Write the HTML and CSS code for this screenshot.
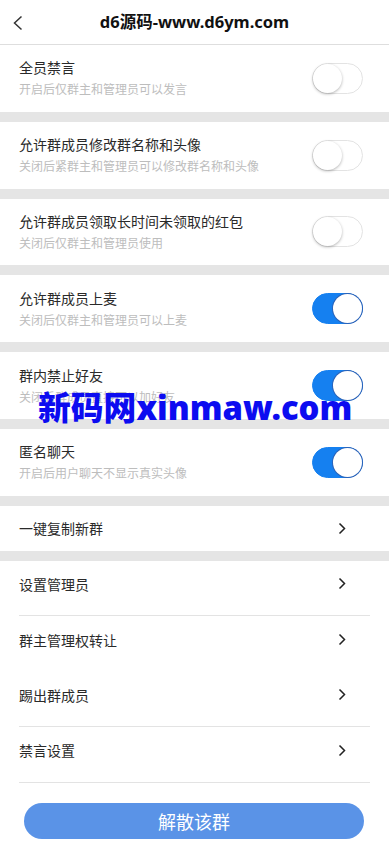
FILE: index.html
```html
<!DOCTYPE html>
<html lang="zh">
<head>
<meta charset="utf-8">
<title>群设置</title>
<link rel="stylesheet" href="styles.css">
</head>
<body>
<div class="page">
  <header class="topbar">
    <span class="back">
      <svg width="12" height="16" viewBox="0 0 12 16"><path d="M9.5 1.5 L2.5 8 L9.5 14.5" fill="none" stroke="#333" stroke-width="1.5"/></svg>
    </span>
    <h1 class="title">d6源码-www.d6ym.com</h1>
  </header>

  <section class="card switch-row">
    <div class="texts"><div class="t">全员禁言</div><div class="s">开启后仅群主和管理员可以发言</div></div>
    <span class="toggle"><span class="knob"></span></span>
  </section>
  <section class="card switch-row">
    <div class="texts"><div class="t">允许群成员修改群名称和头像</div><div class="s">关闭后紧群主和管理员可以修改群名称和头像</div></div>
    <span class="toggle"><span class="knob"></span></span>
  </section>
  <section class="card switch-row">
    <div class="texts"><div class="t">允许群成员领取长时间未领取的红包</div><div class="s">关闭后仅群主和管理员使用</div></div>
    <span class="toggle"><span class="knob"></span></span>
  </section>
  <section class="card switch-row">
    <div class="texts"><div class="t">允许群成员上麦</div><div class="s">关闭后仅群主和管理员可以上麦</div></div>
    <span class="toggle on"><span class="knob"></span></span>
  </section>
  <section class="card switch-row">
    <div class="texts"><div class="t">群内禁止好友</div><div class="s">关闭后群成员直接可以加好友</div></div>
    <span class="toggle on"><span class="knob"></span></span>
  </section>
  <section class="card switch-row">
    <div class="texts"><div class="t">匿名聊天</div><div class="s">开启后用户聊天不显示真实头像</div></div>
    <span class="toggle on"><span class="knob"></span></span>
  </section>

  <section class="card single-row">
    <span class="t">一键复制新群</span>
    <svg class="chev" width="8" height="13" viewBox="0 0 8 13"><path d="M1.5 1.5 L6.5 6.5 L1.5 11.5" fill="none" stroke="#222" stroke-width="1.5"/></svg>
  </section>

  <section class="card list">
    <div class="item line"><span class="t">设置管理员</span><svg class="chev" width="8" height="13" viewBox="0 0 8 13"><path d="M1.5 1.5 L6.5 6.5 L1.5 11.5" fill="none" stroke="#222" stroke-width="1.5"/></svg></div>
    <div class="item"><span class="t">群主管理权转让</span><svg class="chev" width="8" height="13" viewBox="0 0 8 13"><path d="M1.5 1.5 L6.5 6.5 L1.5 11.5" fill="none" stroke="#222" stroke-width="1.5"/></svg></div>
    <div class="item line"><span class="t">踢出群成员</span><svg class="chev" width="8" height="13" viewBox="0 0 8 13"><path d="M1.5 1.5 L6.5 6.5 L1.5 11.5" fill="none" stroke="#222" stroke-width="1.5"/></svg></div>
    <div class="item line"><span class="t">禁言设置</span><svg class="chev" width="8" height="13" viewBox="0 0 8 13"><path d="M1.5 1.5 L6.5 6.5 L1.5 11.5" fill="none" stroke="#222" stroke-width="1.5"/></svg></div>
    <div class="btn-wrap"><button class="dissolve">解散该群</button></div>
  </section>

  <div class="watermark">新码网xinmaw.com</div>
</div>
</body>
</html>
```

FILE: styles.css
```css
* { box-sizing: border-box; }
html, body { margin: 0; padding: 0; }
body {
  font-family: "Noto Sans CJK SC", "Noto Sans", sans-serif;
  background: #ffffff;
  color: #333;
}
.page {
  position: relative;
  width: 389px;
  min-height: 845px;
  background: #e5e5e5;
  display: flex;
  flex-direction: column;
  gap: 10px;
}
.topbar {
  position: relative;
  height: 45px;
  background: #fff;
  border-bottom: 1px solid #dedede;
  display: flex;
  align-items: center;
  justify-content: center;
  margin-bottom: -10px;
}
.back {
  position: absolute;
  left: 12px;
  top: 15px;
  display: flex;
}
.title {
  margin: 0;
  font-family: "Noto Sans", "Noto Sans CJK SC", sans-serif;
  font-size: 16.5px;
  font-weight: 700;
  color: #111;
  line-height: 24px;
}
.card { background: #fff; }
.switch-row {
  height: 66.8px;
  padding: 0 26px 0 19px;
  display: flex;
  align-items: center;
  justify-content: space-between;
}
.texts { display: flex; flex-direction: column; gap: 3px; margin-top: -2px; }
.t { font-size: 14px; line-height: 20px; color: #2a2a2a; }
.s { font-size: 12px; line-height: 17px; color: #bdbdbd; }
.toggle {
  position: relative;
  width: 51px;
  height: 31px;
  border-radius: 16px;
  border: 1px solid #e3e3e3;
  background: #fff;
  flex-shrink: 0;
}
.toggle .knob {
  position: absolute;
  left: 0;
  top: 0;
  width: 29px;
  height: 29px;
  border-radius: 50%;
  background: #fff;
  box-shadow: 0 1px 3px rgba(0,0,0,0.3);
}
.toggle.on {
  background: #1580f0;
  border-color: #1580f0;
}
.toggle.on .knob {
  left: auto;
  right: 0;
  box-shadow: 0 0 0 1px #2a62b8;
}
.single-row {
  height: 45px;
  padding: 0 43px 0 19px;
  display: flex;
  align-items: center;
  justify-content: space-between;
}
.chev { display: block; }
.list {
  display: flex;
  flex-direction: column;
  flex: 1;
  padding: 0 19px;
}
.item {
  height: 55.5px;
  padding: 0 24px 9px 0;
  display: flex;
  align-items: center;
  justify-content: space-between;
}
.item.line { border-bottom: 1px solid #e3e3e3; }
.btn-wrap {
  padding: 20px 6px 0 5px;
}
.dissolve {
  display: block;
  width: 100%;
  height: 36px;
  border: none;
  border-radius: 18px;
  background: #5a93e7;
  color: #fff;
  font-family: "Noto Sans CJK SC", sans-serif;
  font-size: 18px;
  line-height: 36px;
  padding: 0;
}
.watermark {
  position: absolute;
  left: 38px;
  top: 386px;
  font-family: "Noto Sans", "Noto Sans CJK SC", sans-serif;
  font-size: 32.8px;
  font-weight: 900;
  line-height: 44px;
  color: #0c0cf0;
  white-space: nowrap;
}
```
